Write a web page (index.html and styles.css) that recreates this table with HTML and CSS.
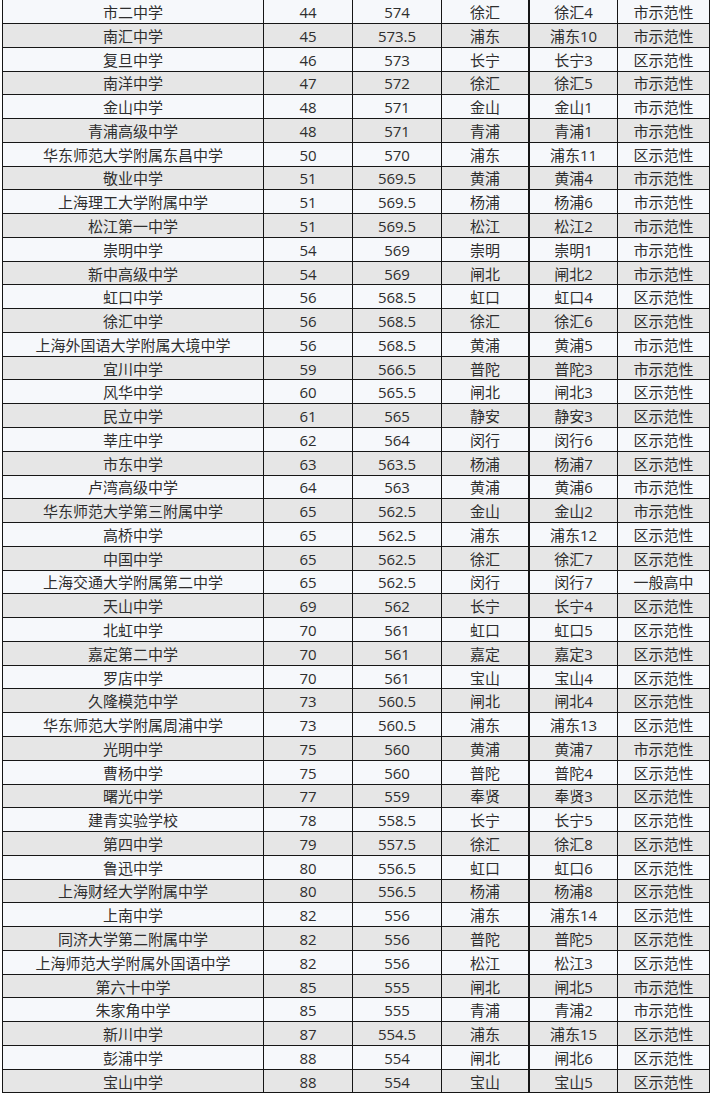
FILE: index.html
```html
<!DOCTYPE html>
<html lang="zh-CN">
<head>
<meta charset="utf-8">
<title>录取分数线</title>
<link rel="stylesheet" href="styles.css">
</head>
<body>
<table class="score-table">
<colgroup>
<col class="c-name"><col class="c-rank"><col class="c-score"><col class="c-area"><col class="c-code"><col class="c-type">
</colgroup>
<tbody>
<tr><td>市二中学</td><td>44</td><td>574</td><td>徐汇</td><td class="code">徐汇4</td><td>市示范性</td></tr>
<tr><td>南汇中学</td><td>45</td><td>573.5</td><td>浦东</td><td class="code">浦东10</td><td>市示范性</td></tr>
<tr><td>复旦中学</td><td>46</td><td>573</td><td>长宁</td><td class="code">长宁3</td><td>区示范性</td></tr>
<tr><td>南洋中学</td><td>47</td><td>572</td><td>徐汇</td><td class="code">徐汇5</td><td>市示范性</td></tr>
<tr><td>金山中学</td><td>48</td><td>571</td><td>金山</td><td class="code">金山1</td><td>市示范性</td></tr>
<tr><td>青浦高级中学</td><td>48</td><td>571</td><td>青浦</td><td class="code">青浦1</td><td>市示范性</td></tr>
<tr><td>华东师范大学附属东昌中学</td><td>50</td><td>570</td><td>浦东</td><td class="code">浦东11</td><td>区示范性</td></tr>
<tr><td>敬业中学</td><td>51</td><td>569.5</td><td>黄浦</td><td class="code">黄浦4</td><td>市示范性</td></tr>
<tr><td>上海理工大学附属中学</td><td>51</td><td>569.5</td><td>杨浦</td><td class="code">杨浦6</td><td>市示范性</td></tr>
<tr><td>松江第一中学</td><td>51</td><td>569.5</td><td>松江</td><td class="code">松江2</td><td>市示范性</td></tr>
<tr><td>崇明中学</td><td>54</td><td>569</td><td>崇明</td><td class="code">崇明1</td><td>市示范性</td></tr>
<tr><td>新中高级中学</td><td>54</td><td>569</td><td>闸北</td><td class="code">闸北2</td><td>市示范性</td></tr>
<tr><td>虹口中学</td><td>56</td><td>568.5</td><td>虹口</td><td class="code">虹口4</td><td>区示范性</td></tr>
<tr><td>徐汇中学</td><td>56</td><td>568.5</td><td>徐汇</td><td class="code">徐汇6</td><td>区示范性</td></tr>
<tr><td>上海外国语大学附属大境中学</td><td>56</td><td>568.5</td><td>黄浦</td><td class="code">黄浦5</td><td>市示范性</td></tr>
<tr><td>宜川中学</td><td>59</td><td>566.5</td><td>普陀</td><td class="code">普陀3</td><td>市示范性</td></tr>
<tr><td>风华中学</td><td>60</td><td>565.5</td><td>闸北</td><td class="code">闸北3</td><td>区示范性</td></tr>
<tr><td>民立中学</td><td>61</td><td>565</td><td>静安</td><td class="code">静安3</td><td>区示范性</td></tr>
<tr><td>莘庄中学</td><td>62</td><td>564</td><td>闵行</td><td class="code">闵行6</td><td>区示范性</td></tr>
<tr><td>市东中学</td><td>63</td><td>563.5</td><td>杨浦</td><td class="code">杨浦7</td><td>区示范性</td></tr>
<tr><td>卢湾高级中学</td><td>64</td><td>563</td><td>黄浦</td><td class="code">黄浦6</td><td>市示范性</td></tr>
<tr><td>华东师范大学第三附属中学</td><td>65</td><td>562.5</td><td>金山</td><td class="code">金山2</td><td>市示范性</td></tr>
<tr><td>高桥中学</td><td>65</td><td>562.5</td><td>浦东</td><td class="code">浦东12</td><td>区示范性</td></tr>
<tr><td>中国中学</td><td>65</td><td>562.5</td><td>徐汇</td><td class="code">徐汇7</td><td>区示范性</td></tr>
<tr><td>上海交通大学附属第二中学</td><td>65</td><td>562.5</td><td>闵行</td><td class="code">闵行7</td><td>一般高中</td></tr>
<tr><td>天山中学</td><td>69</td><td>562</td><td>长宁</td><td class="code">长宁4</td><td>区示范性</td></tr>
<tr><td>北虹中学</td><td>70</td><td>561</td><td>虹口</td><td class="code">虹口5</td><td>区示范性</td></tr>
<tr><td>嘉定第二中学</td><td>70</td><td>561</td><td>嘉定</td><td class="code">嘉定3</td><td>区示范性</td></tr>
<tr><td>罗店中学</td><td>70</td><td>561</td><td>宝山</td><td class="code">宝山4</td><td>区示范性</td></tr>
<tr><td>久隆模范中学</td><td>73</td><td>560.5</td><td>闸北</td><td class="code">闸北4</td><td>区示范性</td></tr>
<tr><td>华东师范大学附属周浦中学</td><td>73</td><td>560.5</td><td>浦东</td><td class="code">浦东13</td><td>区示范性</td></tr>
<tr><td>光明中学</td><td>75</td><td>560</td><td>黄浦</td><td class="code">黄浦7</td><td>市示范性</td></tr>
<tr><td>曹杨中学</td><td>75</td><td>560</td><td>普陀</td><td class="code">普陀4</td><td>区示范性</td></tr>
<tr><td>曙光中学</td><td>77</td><td>559</td><td>奉贤</td><td class="code">奉贤3</td><td>区示范性</td></tr>
<tr><td>建青实验学校</td><td>78</td><td>558.5</td><td>长宁</td><td class="code">长宁5</td><td>区示范性</td></tr>
<tr><td>第四中学</td><td>79</td><td>557.5</td><td>徐汇</td><td class="code">徐汇8</td><td>区示范性</td></tr>
<tr><td>鲁迅中学</td><td>80</td><td>556.5</td><td>虹口</td><td class="code">虹口6</td><td>区示范性</td></tr>
<tr><td>上海财经大学附属中学</td><td>80</td><td>556.5</td><td>杨浦</td><td class="code">杨浦8</td><td>区示范性</td></tr>
<tr><td>上南中学</td><td>82</td><td>556</td><td>浦东</td><td class="code">浦东14</td><td>区示范性</td></tr>
<tr><td>同济大学第二附属中学</td><td>82</td><td>556</td><td>普陀</td><td class="code">普陀5</td><td>区示范性</td></tr>
<tr><td>上海师范大学附属外国语中学</td><td>82</td><td>556</td><td>松江</td><td class="code">松江3</td><td>区示范性</td></tr>
<tr><td>第六十中学</td><td>85</td><td>555</td><td>闸北</td><td class="code">闸北5</td><td>市示范性</td></tr>
<tr><td>朱家角中学</td><td>85</td><td>555</td><td>青浦</td><td class="code">青浦2</td><td>市示范性</td></tr>
<tr><td>新川中学</td><td>87</td><td>554.5</td><td>浦东</td><td class="code">浦东15</td><td>区示范性</td></tr>
<tr><td>彭浦中学</td><td>88</td><td>554</td><td>闸北</td><td class="code">闸北6</td><td>区示范性</td></tr>
<tr><td>宝山中学</td><td>88</td><td>554</td><td>宝山</td><td class="code">宝山5</td><td>区示范性</td></tr>
</tbody>
</table>
</body>
</html>
```
FILE: styles.css
```css
html, body {
  margin: 0;
  padding: 0;
  background: #ffffff;
}

.score-table {
  margin: 0 0 0 2px;
  border-collapse: separate;
  border-spacing: 0;
  table-layout: fixed;
  width: 708px;
  border-left: 1px solid #161616;
  font-family: "Open Sans", "Noto Sans CJK SC", sans-serif;
  font-size: 15px;
  color: #2e2e2e;
}

.c-name { width: 261px; }
.c-rank { width: 89px; }
.c-score { width: 89px; }
.c-area { width: 87px; }
.c-code { width: 89px; }
.c-type { width: 92px; }

.score-table td {
  box-sizing: border-box;
  height: 23.78px;
  padding: 1px 0 0;
  text-align: center;
  vertical-align: middle;
  line-height: 18px;
  white-space: nowrap;
  border-right: 1px solid #161616;
  border-bottom: 1px solid #161616;
  background: #f6f8fb;
}

.score-table tr:first-child td {
  height: 24px;
}

.score-table tr:nth-child(even) td {
  background: #e6e6e6;
}

.score-table td.code {
  border-left: 1px solid #161616;
}
```
